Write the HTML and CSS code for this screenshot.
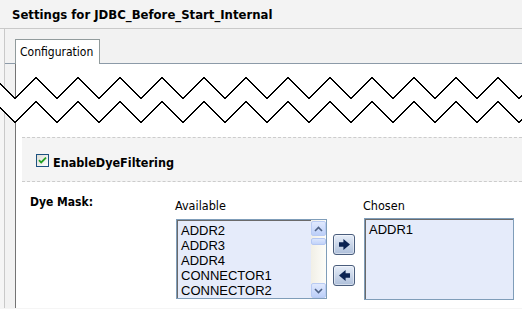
FILE: index.html
```html
<!DOCTYPE html>
<html lang="en">
<head>
  <meta charset="UTF-8">
  <title>Settings for JDBC_Before_Start_Internal</title>
  <link rel="stylesheet" href="styles.css">
</head>
<body>
  <div class="titlebar">Settings for JDBC_Before_Start_Internal</div>

  <div class="frame">
    <div class="tabstrip">
      <div class="tab">Configuration</div>
    </div>
    <div class="panel panel-top"></div>
  </div>

  <!-- torn edge: part of the page is cut out -->
  <svg class="tear" width="522" height="46" viewBox="0 0 522 46" shape-rendering="crispEdges">
    <polygon fill="#fff" points="-6,0.5 15,21.5 36,0.5 57,21.5 78,0.5 99,21.5 120,0.5 141,21.5 162,0.5 183,21.5 204,0.5 225,21.5 246,0.5 267,21.5 288,0.5 309,21.5 330,0.5 351,21.5 372,0.5 393,21.5 414,0.5 435,21.5 456,0.5 477,21.5 498,0.5 519,21.5 540,0.5 540,24.5 519,45.5 498,24.5 477,45.5 456,24.5 435,45.5 414,24.5 393,45.5 372,24.5 351,45.5 330,24.5 309,45.5 288,24.5 267,45.5 246,24.5 225,45.5 204,24.5 183,45.5 162,24.5 141,45.5 120,24.5 99,45.5 78,24.5 57,45.5 36,24.5 15,45.5 -6,24.5"/>
    <polyline fill="none" stroke="#000" points="-6,0.5 15,21.5 36,0.5 57,21.5 78,0.5 99,21.5 120,0.5 141,21.5 162,0.5 183,21.5 204,0.5 225,21.5 246,0.5 267,21.5 288,0.5 309,21.5 330,0.5 351,21.5 372,0.5 393,21.5 414,0.5 435,21.5 456,0.5 477,21.5 498,0.5 519,21.5 540,0.5"/>
    <polyline fill="none" stroke="#000" points="-6,24.5 15,45.5 36,24.5 57,45.5 78,24.5 99,45.5 120,24.5 141,45.5 162,24.5 183,45.5 204,24.5 225,45.5 246,24.5 267,45.5 288,24.5 309,45.5 330,24.5 351,45.5 372,24.5 393,45.5 414,24.5 435,45.5 456,24.5 477,45.5 498,24.5 519,45.5 540,24.5"/>
  </svg>

  <div class="frame frame-bottom">
    <div class="panel panel-bottom">
      <div class="dye-box">
        <svg class="check" width="13" height="13" viewBox="0 0 13 13">
          <defs>
            <linearGradient id="cbfill" x1="0" y1="0" x2="1" y2="1">
              <stop offset="0" stop-color="#dcdcd5"/>
              <stop offset="1" stop-color="#ffffff"/>
            </linearGradient>
          </defs>
          <rect x="0.5" y="0.5" width="12" height="12" fill="url(#cbfill)" stroke="#1c5180"/>
          <path d="M3 6.2l2.2 2.3L10 3.7" fill="none" stroke="#21a121" stroke-width="1.8"/>
        </svg>
        <span class="check-label">EnableDyeFiltering</span>
      </div>

      <div class="mask-row">
        <div class="mask-label">Dye Mask:</div>

        <div class="picker">
          <div class="picker-title">Available</div>
          <div class="listbox">
            <ul class="items">
              <li>ADDR2</li>
              <li>ADDR3</li>
              <li>ADDR4</li>
              <li>CONNECTOR1</li>
              <li>CONNECTOR2</li>
            </ul>
            <div class="scrollbar">
              <div class="sb-btn">
                <svg width="9" height="6" viewBox="0 0 9 6"><path d="M1 5l3.5-3.5L8 5" fill="none" stroke="#4d6185" stroke-width="1.6"/></svg>
              </div>
              <div class="sb-thumb"></div>
              <div class="sb-track"></div>
              <div class="sb-btn">
                <svg width="9" height="6" viewBox="0 0 9 6"><path d="M1 1l3.5 3.5L8 1" fill="none" stroke="#4d6185" stroke-width="1.6"/></svg>
              </div>
            </div>
          </div>
        </div>

        <div class="movers">
          <div class="move-btn">
            <svg width="11" height="11" viewBox="0 0 10 10"><path d="M0 3h4V0l6 5-6 5V7H0z" fill="#0b2352"/></svg>
          </div>
          <div class="move-btn">
            <svg width="11" height="11" viewBox="0 0 10 10"><path d="M10 3H6V0L0 5l6 5V7h4z" fill="#0b2352"/></svg>
          </div>
        </div>

        <div class="picker picker-chosen">
          <div class="picker-title">Chosen</div>
          <div class="listbox">
            <ul class="items">
              <li>ADDR1</li>
            </ul>
          </div>
        </div>
      </div>
    </div>
  </div>
</body>
</html>
```

FILE: styles.css
```css
body {
  margin: 0;
  background: #f5f5f5;
  font-family: "DejaVu Sans Condensed", "DejaVu Sans", sans-serif;
  font-size: 12px;
  line-height: 15px;
  color: #000;
  overflow: hidden;
}
.titlebar {
  height: 29px;
  box-sizing: border-box;
  padding: 7px 0 0 12px;
  border-bottom: 1px solid #c9c9c9;
  font-size: 13px;
  font-weight: bold;
  background: #f3f3f3;
}
.frame {
  margin-left: 4px;
  border-left: 1px solid #c9c9c9;
  background: #f2f2f2;
}
.frame-bottom {
  height: 206px;
}
.tabstrip {
  display: flex;
  padding: 10px 0 0 10px;
  border-bottom: 1px solid #8c9aa8;
}
.tab {
  width: 85px;
  height: 25px;
  box-sizing: border-box;
  margin-bottom: -1px;
  padding: 5px 0 0 4px;
  border: 1px solid #919b9c;
  border-bottom: none;
  background: #fff;
}
.panel {
  margin-left: 10px;
  border-left: 1px solid #747474;
  background: #fff;
}
.panel-top {
  height: 34px;
}
.panel-bottom {
  height: 100%;
  box-sizing: border-box;
  padding-top: 35px;
}
.tear {
  display: block;
  position: relative;
  margin: -21px 0 -21px;
}
.dye-box {
  display: flex;
  align-items: flex-start;
  height: 45px;
  box-sizing: border-box;
  margin-left: 6px;
  padding: 16px 0 0 14px;
  border-top: 1px dashed #cccccc;
  border-bottom: 1px dashed #cccccc;
  background: #f4f4f4;
}
.check {
  display: block;
}
.check-label {
  margin: 1px 0 0 4px;
  font-size: 12.5px;
  font-weight: bold;
}
.mask-row {
  display: flex;
  align-items: flex-start;
  margin-top: 13px;
  padding-left: 14px;
}
.mask-label {
  width: 145px;
  font-weight: bold;
}
.picker-title {
  margin-top: 3px;
  font-size: 12.5px;
}
.listbox {
  display: flex;
  width: 151px;
  height: 80px;
  box-sizing: border-box;
  margin: 6px 0 0 1px;
  border: 1px solid #7f9db9;
  box-shadow: inset 1px 1px 0 #6a6a6a;
  background: #e5ebfa;
  overflow: hidden;
}
.picker-chosen .listbox {
  width: 150px;
  height: 82px;
  margin-top: 5px;
}
.items {
  flex: 1;
  margin: 0;
  padding: 3px 0 0 4px;
  list-style: none;
  font-family: "Liberation Sans", Arial, sans-serif;
  font-size: 13px;
  line-height: 15px;
}
.scrollbar {
  display: flex;
  flex-direction: column;
  width: 15px;
  padding-top: 1px;
  background: linear-gradient(to right, #f1efe6, #fdfdf9);
}
.sb-btn {
  display: flex;
  align-items: center;
  justify-content: center;
  height: 15px;
  box-sizing: border-box;
  border: 1px solid #b9cbf3;
  border-radius: 2px;
  background: linear-gradient(#e0e9fe, #bccff8);
}
.sb-thumb {
  height: 7px;
  margin-top: 2px;
  box-sizing: border-box;
  border: 1px solid #b4c7f3;
  border-radius: 2px;
  background: linear-gradient(#dbe6fd, #c2d3f9);
}
.sb-track {
  flex: 1;
}
.movers {
  display: flex;
  flex-direction: column;
  gap: 10px;
  margin-left: 6px;
  padding-top: 39px;
}
.move-btn {
  display: flex;
  align-items: center;
  justify-content: center;
  width: 22px;
  height: 21px;
  box-sizing: border-box;
  border: 1px solid #4a5d7c;
  border-radius: 3px;
  background: linear-gradient(#e6edf8, #aebfda);
  box-shadow: inset 0 0 0 1px rgba(255, 255, 255, 0.45);
}
.picker-chosen {
  margin-left: 8px;
}
```
